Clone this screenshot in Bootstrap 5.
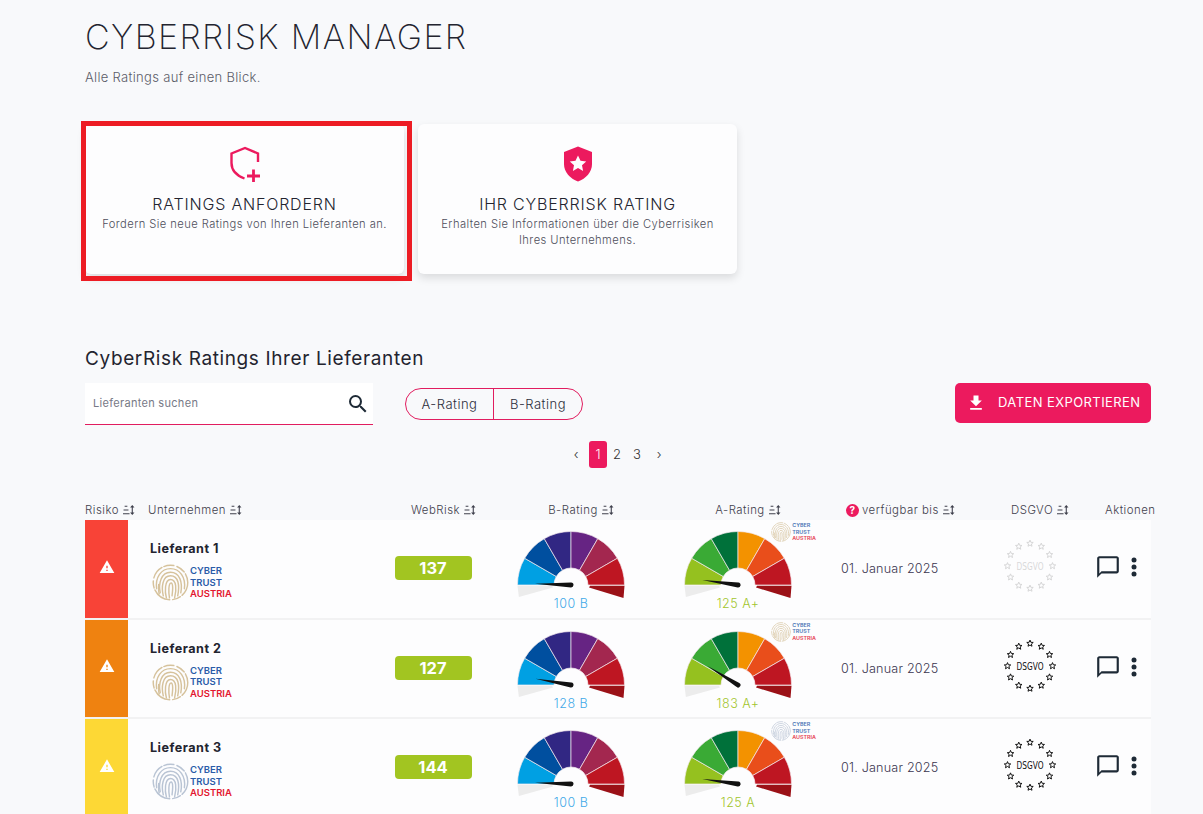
<!DOCTYPE html>
<html lang="de">
<head>
    <meta charset="UTF-8">
    <title>Cyberrisk Manager</title>
    <link rel="stylesheet" href="https://cdn.jsdelivr.net/npm/bootstrap@5.3.0/dist/css/bootstrap.min.css">
    <style>
        html, body { height: 814px; overflow: hidden; }
        body { background: #f8f9fb; color: #2b2d3a; font-family: Inter, "Open Sans", sans-serif; font-weight: 300; }
        .page-wrap { width: 1066px; margin-left: 85px; padding-top: 15px; }
        .page-title { font-size: 34px; font-weight: 200; line-height: 44px; margin: 0; letter-spacing: 1.4px; color: #23242f; }
        .page-sub { font-size: 13px; line-height: 18px; margin: 9px 0 0; color: #5b5c68; letter-spacing: .32px; }
        .tile-row { margin-top: 38px; gap: 14px; }
        .tile { position: relative; width: 319px; height: 150px; background: #fdfdfe; border-radius: 6px; box-shadow: 0 4px 8px rgba(0,0,0,.12); padding-top: 22px; text-align: center; }
        .tile-frame { position: absolute; left: -4px; top: -3px; width: 331px; height: 160px; border: 5px solid #ed1c24; pointer-events: none; }
        .tile-icon { width: 34px; height: 36px; display: block; margin: 0 auto 12px; color: #ec1a5e; }
        .tile-title { font-size: 16px; line-height: 20px; letter-spacing: .82px; color: #23242f; margin: 0; font-weight: 300; }
        .tile-text { font-size: 11.2px; line-height: 16px; color: #4d4e5b; margin: 2px auto 0; width: 290px; letter-spacing: .43px; font-weight: 300; }
        .section-title { font-size: 19px; line-height: 24px; font-weight: 400; margin: 73px 0 0; color: #23242f; letter-spacing: .62px; }
        .tool-row { margin-top: 12px; height: 42px; }
        .search-box { width: 288px; height: 42px; background: #fff; border-bottom: 1.5px solid #e11d5f; padding: 0 3px 0 8px; }
        .search-box input { border: 0; outline: 0; padding: 0; background: transparent; font-size: 11px; flex: 1; color: #444; font-family: inherit; letter-spacing: .3px; }
        .search-box input::placeholder { color: #777986; }
        .rating-toggle { margin-left: 32px; height: 32px; border: 1px solid #e11d5f; border-radius: 16px; overflow: hidden; width: 178px; }
        .rating-toggle span { flex: 1; font-size: 13px; line-height: 30px; text-align: center; letter-spacing: .5px; color: #2b2d3a; }
        .rating-toggle span:first-child { flex: none; width: 87px; }
        .rating-toggle span + span { border-left: 1px solid #e11d5f; }
        .export-btn { margin: 0 0 2px auto; width: 196px; height: 40px; background: #ec1a5e; color: #fff; border: 0; border-radius: 5px; font-size: 13px; font-weight: 400; padding: 0 0 0 11px; gap: 12px; letter-spacing: .42px; }
        .pager { margin-top: 16px; height: 27px; padding-left: 481px; font-size: 13px; color: #333; }
        .pager span { width: 20px; text-align: center; line-height: 27px; }
        .pager .prev-pg { margin-right: 3px; }
        .pager .next-pg { margin-left: 2px; }
        .pager .current { width: 18px; background: #ec1a5e; color: #fff; border-radius: 3px; }
        .grid-cols { display: grid; grid-template-columns: 43px 249px 113px 162px 172px 161px 90px 76px; }
        .head-row { margin-top: 34px; height: 18px; font-size: 11.4px; line-height: 16px; color: #3f404c; letter-spacing: .5px; white-space: nowrap; }
        .head-row > div { display: flex; align-items: flex-start; }
        .head-center { padding-left: 20px; justify-content: center; }
        .head-co { padding-left: 20px; }
        .head-date { padding-left: 22px; }
        .head-seal { padding-left: 26px; }
        .head-act { padding-left: 30px; }
        .sort-ic { width: 12px; height: 10px; margin: 3px 0 0 4px; flex: none; }
        .help-dot { width: 13px; height: 13px; line-height: 13px; border-radius: 50%; background: #ec1a5e; color: #fff; text-align: center; font-size: 10px; font-weight: 700; margin: 2px 3px 0 0; }
        .data-row { height: 99.5px; background: #fdfdfe; border-bottom: 2px solid #f2f2f3; }
        .risk-cell { display: flex; align-items: center; justify-content: center; }
        .risk-red { background: #f84337; }
        .risk-orange { background: #ef8210; }
        .risk-yellow { background: #fdd835; }
        .risk-cell svg { width: 16px; height: 16px; margin-bottom: 4px; }
        .company-cell { padding: 21px 0 0 22px; }
        .company-name { font-size: 12.6px; line-height: 16px; font-weight: 700; color: #23242f; letter-spacing: .5px; }
        .ct-logo { display: flex; align-items: center; }
        .ct-logo svg { flex: none; }
        .ct-words { font-weight: 600; color: #2a5ba8; }
        .ct-words b { display: block; font-weight: 600; }
        .ct-words .ct-red { color: #e3172f; }
        .ct-big { margin: 7px 0 0 2px; }
        .ct-big svg { width: 37px; height: 37px; }
        .ct-big .ct-words { font-size: 9.5px; line-height: 11.5px; margin-left: 1px; }
        .score-cell { padding-top: 36px; display: flex; justify-content: center; }
        .score-pill { width: 77px; height: 24px; margin-left: -1px; background: #a2c521; color: #fff; border-radius: 4px; text-align: center; font-size: 16.5px; line-height: 24px; font-weight: 700; }
        .gauge-cell { position: relative; display: flex; justify-content: center; padding-top: 7px; }
        .gauge-cell > svg { width: 120px; height: 90px; }
        .gauge-label { font-family: Inter, sans-serif; font-size: 12.5px; font-weight: 300; text-anchor: middle; letter-spacing: .5px; }
        .ct-mini { position: absolute; top: 2px; right: 8px; opacity: .85; }
        .ct-mini svg { width: 20px; height: 20px; }
        .ct-mini .ct-words { font-size: 5.4px; line-height: 6.6px; margin-left: 1px; }
        .date-cell { padding: 40px 0 0 17px; font-size: 12.6px; line-height: 18px; color: #3a3550; letter-spacing: .2px; }
        .seal-cell { display: flex; justify-content: center; padding-top: 16px; }
        .seal-cell svg { width: 60px; height: 60px; color: #111; }
        .seal-faded svg { opacity: .16; }
        .action-cell { padding: 34px 0 0 20px; display: flex; align-items: flex-start; }
        .action-cell svg { display: block; color: #1e2a36; }
    </style>
</head>
<body>
    <!-- Icons -->
    <svg width="0" height="0" class="position-absolute">
        <symbol id="print" viewBox="0 0 36 36">
            <g fill="none" stroke="currentColor" stroke-width="1.4" stroke-linecap="round">
                <circle cx="18" cy="18" r="16.8" stroke-dasharray="14 2 8 3 18 2 7 3 13 2 10 3 9 2"/>
                <path d="M4.5 24C3 13 9 4.5 18 4.5S33 13 31.5 24M7 29c-1-3-.5-6-.5-9"/>
                <path d="M8 28C6 19 9 8 18 8s12 10 10 20"/>
                <path d="M11 31c-2-8-1-19.5 7-19.5S27 21 25 31"/>
                <path d="M14 33c-1.5-5-2-18 4-18s6 10 4 18"/>
                <path d="M17 33c-1-5-1-14.5 1.5-14.5S20 27 19.5 31"/>
            </g>
        </symbol>
        <symbol id="warn" viewBox="0 0 24 24"><path fill="#fff" fill-rule="evenodd" d="M1 21h22L12 2 1 21zm12-3h-2v-2h2v2zm0-4h-2v-4h2v4z"/></symbol>
        <symbol id="sort" viewBox="0 0 11 9">
            <path fill="none" stroke="currentColor" d="M1.5 1H4M.5 4.5H5M0 8h6"/>
            <path fill="none" stroke="currentColor" d="M8.5 1v7"/>
            <path fill="currentColor" d="M8.5 0l2 2.3h-4zM8.5 9l2-2.3h-4z"/>
        </symbol>
    </svg>

    <div class="page-wrap">
        <h1 class="page-title">CYBERRISK MANAGER</h1>
        <p class="page-sub">Alle Ratings auf einen Blick.</p>

        <!-- Kacheln -->
        <div class="d-flex tile-row">
            <div class="tile">
                <span class="tile-frame"></span>
                <svg class="tile-icon" viewBox="0 0 34 36">
                    <path fill="none" stroke="currentColor" stroke-width="2.4" d="M30 16V7.5L17 2 3.5 7.5V17c0 7 5 12.500 13 15.500"/>
                    <path fill="none" stroke="currentColor" stroke-width="2.8" d="M19 30h13M25.5 23.5v13"/>
                </svg>
                <h5 class="tile-title">RATINGS ANFORDERN</h5>
                <p class="tile-text">Fordern Sie neue Ratings von Ihren Lieferanten an.</p>
            </div>
            <div class="tile">
                <svg class="tile-icon" viewBox="0 0 34 36">
                    <path fill="currentColor" d="M17 .5 31 6v12c0 8-6 14.500-14 17.500C9 32.500 3 26 3 18V6z"/>
                    <path fill="#fdfdfe" d="m17 9.5 2.500 5.200 5.700.7-4.200 3.900 1.100 5.600-5.100-2.800-5.100 2.800 1.100-5.600-4.200-3.900 5.700-.7z"/>
                </svg>
                <h5 class="tile-title">IHR CYBERRISK RATING</h5>
                <p class="tile-text">Erhalten Sie Informationen über die Cyberrisiken Ihres Unternehmens.</p>
            </div>
        </div>

        <h5 class="section-title">CyberRisk Ratings Ihrer Lieferanten</h5>

        <!-- Suche und Filter -->
        <div class="d-flex align-items-center tool-row">
            <div class="d-flex align-items-center search-box">
                <input type="text" placeholder="Lieferanten suchen">
                <svg width="24" height="24" viewBox="0 0 24 24"><path fill="#1e2a36" d="M15.5 14h-.79l-.28-.27A6.47 6.47 0 0 0 16 9.5 6.5 6.5 0 1 0 9.5 16c1.61 0 3.09-.59 4.23-1.57l.27.28v.79l5 4.99L20.49 19l-4.990-5zm-6 0C7.01 14 5 11.990 5 9.5S7.010 5 9.5 5 14 7.010 14 9.5 11.990 14 9.5 14z"/></svg>
            </div>
            <div class="d-flex rating-toggle">
                <span>A-Rating</span>
                <span>B-Rating</span>
            </div>
            <button class="btn d-flex align-items-center export-btn">
                <svg width="20" height="20" viewBox="0 0 24 24"><path fill="#fff" d="M19 9h-4V3H9v6H5l7 7 7-7zM5 18v2h14v-2H5z"/></svg>
                DATEN EXPORTIEREN
            </button>
        </div>

        <!-- Seiten -->
        <div class="d-flex pager">
            <span class="prev-pg">‹</span>
            <span class="current">1</span>
            <span>2</span>
            <span>3</span>
            <span class="next-pg">›</span>
        </div>

        <!-- Tabelle -->
        <div class="grid-cols head-row">
            <div>Risiko<svg class="sort-ic"><use href="#sort"/></svg></div>
            <div class="head-co">Unternehmen<svg class="sort-ic"><use href="#sort"/></svg></div>
            <div class="head-center">WebRisk<svg class="sort-ic"><use href="#sort"/></svg></div>
            <div class="head-center">B-Rating<svg class="sort-ic"><use href="#sort"/></svg></div>
            <div class="head-center">A-Rating<svg class="sort-ic"><use href="#sort"/></svg></div>
            <div class="head-date"><span class="help-dot">?</span>verfügbar bis<svg class="sort-ic"><use href="#sort"/></svg></div>
            <div class="head-seal">DSGVO<svg class="sort-ic"><use href="#sort"/></svg></div>
            <div class="head-act">Aktionen</div>
        </div>
        <div id="rows"></div>
    </div>

    <script src="https://cdn.jsdelivr.net/npm/bootstrap@5.3.0/dist/js/bootstrap.bundle.min.js"></script>
    <script>
        const COLORS_B = ["#00a0e3", "#004f9f", "#312783", "#662483", "#a3274f", "#be1622"];
        const COLORS_A = ["#95c11f", "#3aaa35", "#00713a", "#f39200", "#e94e1b", "#be1622"];
        const suppliers = [
            { name: "Lieferant 1", risk: "risk-red", score: 137, b: "100 B", bAngle: 2, a: "125 A+", aAngle: 8, seal: "seal-faded", print: "#d6c29c" },
            { name: "Lieferant 2", risk: "risk-orange", score: 127, b: "128 B", bAngle: 10, a: "183 A+", aAngle: 32, seal: "", print: "#d6c29c" },
            { name: "Lieferant 3", risk: "risk-yellow", score: 144, b: "100 B", bAngle: 2, a: "125 A", aAngle: 8, seal: "", print: "#b9c4d4" }
        ];

        const CX = 60, CY = 58, R = 53.5, HOLE = 17;

        // deg 0 = links, 180 = rechts
        function pt(r, deg) {
            const t = deg * Math.PI / 180;
            return (CX - r * Math.cos(t)).toFixed(2) + " " + (CY - r * Math.sin(t)).toFixed(2);
        }

        function gauge(colors, lowColor, angle, label, labelColor) {
            let out = "";
            colors.forEach((c, i) => {
                const from = i * 30, to = from + 30;
                out += `<path fill="${c}" stroke="#f4e9ee" stroke-width=".7" d="M${pt(HOLE, from)}L${pt(R, from)}A${R} ${R} 0 0 1 ${pt(R, to)}L${pt(HOLE, to)}A${HOLE} ${HOLE} 0 0 0 ${pt(HOLE, from)}Z"/>`;
            });
            out += `<path fill="#ececec" d="M${CX - R} ${CY + .8}L${pt(R, -13)}L${CX - 18} ${CY + 2.5}L${CX - 19} ${CY + .8}Z"/>`;
            out += `<path fill="${lowColor}" d="M${CX + R} ${CY + .8}L${CX + R - 1} ${CY + 13}L${CX + 18} ${CY + 2.5}L${CX + 19} ${CY + .8}Z"/>`;
            out += `<g transform="rotate(${angle} ${CX} ${CY})"><path fill="#111" d="M${CX - 36} ${CY}L${CX} ${CY - 2.5}A2.5 2.5 0 0 1 ${CX} ${CY + 2.5}Z"/></g>`;
            out += `<text class="gauge-label" x="${CX}" y="${CY + 23}" fill="${labelColor}">${label}</text>`;
            return `<svg viewBox="0 0 120 90">${out}</svg>`;
        }

        function logo(cls, color) {
            return `<div class="ct-logo ${cls}"><svg style="color:${color}"><use href="#print"/></svg>
                <div class="ct-words"><b>CYBER</b><b>TRUST</b><b class="ct-red">AUSTRIA</b></div></div>`;
        }

        // Ring aus 12 Sternen
        function seal() {
            let stars = "";
            for (let i = 0; i < 12; i++) {
                const t = i * Math.PI / 6, sx = 30 + 22.5 * Math.sin(t), sy = 30 - 22.5 * Math.cos(t);
                let p = [];
                for (let k = 0; k < 10; k++) {
                    const r = k % 2 ? 1.5 : 3.4, a = k * Math.PI / 5;
                    p.push((sx + r * Math.sin(a)).toFixed(2) + "," + (sy - r * Math.cos(a)).toFixed(2));
                }
                stars += `<polygon points="${p.join(" ")}" fill="none" stroke="currentColor" stroke-width="1"/>`;
            }
            return `<svg viewBox="0 0 60 60">${stars}<text x="30" y="33.5" text-anchor="middle" textLength="27" lengthAdjust="spacingAndGlyphs" fill="currentColor" font-family="'DejaVu Sans', sans-serif" font-weight="400" font-size="10">DSGVO</text></svg>`;
        }

        document.getElementById("rows").innerHTML = suppliers.map(s => `
            <div class="grid-cols data-row">
                <div class="risk-cell ${s.risk}"><svg><use href="#warn"/></svg></div>
                <div class="company-cell">
                    <div class="company-name">${s.name}</div>
                    ${logo("ct-big", s.print)}
                </div>
                <div class="score-cell"><div class="score-pill">${s.score}</div></div>
                <div class="gauge-cell">${gauge(COLORS_B, "#9b1117", s.bAngle, s.b, "#41a9e8")}</div>
                <div class="gauge-cell">${gauge(COLORS_A, "#9b1117", s.aAngle, s.a, "#a2c52c")}${logo("ct-mini", s.print)}</div>
                <div class="date-cell">01. Januar 2025</div>
                <div class="seal-cell ${s.seal}">${seal()}</div>
                <div class="action-cell">
                    <svg width="26" height="26" viewBox="0 0 24 24"><path fill="currentColor" d="M20 2H4c-1.1 0-2 .9-2 2v18l4-4h14c1.1 0 2-.9 2-2V4c0-1.1-.9-2-2-2zm0 14H6l-2 2V4h16v12z"/></svg>
                    <svg width="24" height="26" viewBox="0 0 24 26"><circle cx="13" cy="6" r="2.5" fill="currentColor"/><circle cx="13" cy="13" r="2.5" fill="currentColor"/><circle cx="13" cy="20" r="2.5" fill="currentColor"/></svg>
                </div>
            </div>`).join("");
    </script>
</body>
</html>
